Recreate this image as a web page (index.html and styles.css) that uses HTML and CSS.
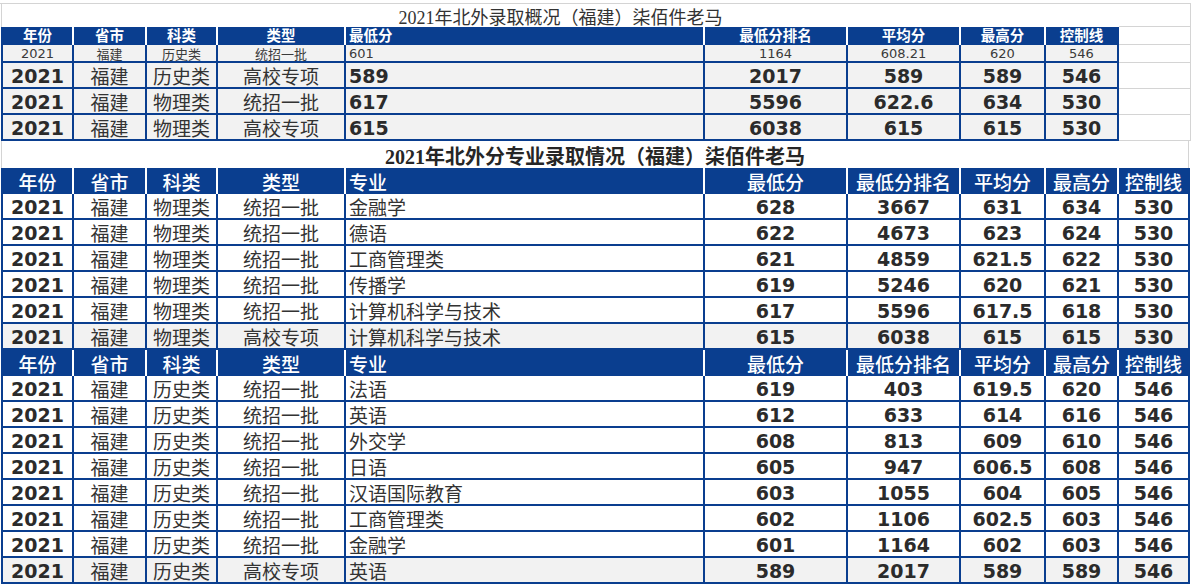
FILE: index.html
```html
<!DOCTYPE html>
<html lang="zh-CN">
<head>
<meta charset="utf-8">
<title>2021年北外录取概况（福建）</title>
<link rel="stylesheet" href="styles.css">
</head>
<body>
<div class="sheet">
  <div class="sheet-top"></div>
  <div class="sec1">
    <div class="t1">
      <div class="title1">2021年北外录取概况（福建）柒佰件老马</div>
      <div class="row r9 head head-s">
        <div class="cell">年份</div><div class="cell">省市</div><div class="cell">科类</div><div class="cell">类型</div><div class="cell l">最低分</div><div class="cell">最低分排名</div><div class="cell">平均分</div><div class="cell">最高分</div><div class="cell">控制线</div>
      </div>
      <div class="row r9 small gray">
        <div class="cell">2021</div><div class="cell zh">福建</div><div class="cell zh">历史类</div><div class="cell zh">统招一批</div><div class="cell l">601</div><div class="cell">1164</div><div class="cell">608.21</div><div class="cell">620</div><div class="cell">546</div>
      </div>
      <div class="row r9 big gray">
        <div class="cell num">2021</div><div class="cell zh">福建</div><div class="cell zh">历史类</div><div class="cell zh">高校专项</div><div class="cell num l">589</div><div class="cell num">2017</div><div class="cell num">589</div><div class="cell num">589</div><div class="cell num">546</div>
      </div>
      <div class="row r9 big gray">
        <div class="cell num">2021</div><div class="cell zh">福建</div><div class="cell zh">物理类</div><div class="cell zh">统招一批</div><div class="cell num l">617</div><div class="cell num">5596</div><div class="cell num">622.6</div><div class="cell num">634</div><div class="cell num">530</div>
      </div>
      <div class="row r9 big gray">
        <div class="cell num">2021</div><div class="cell zh">福建</div><div class="cell zh">物理类</div><div class="cell zh">高校专项</div><div class="cell num l">615</div><div class="cell num">6038</div><div class="cell num">615</div><div class="cell num">615</div><div class="cell num">530</div>
      </div>
    </div>
    <div class="filler">
      <div class="fc f-title"></div>
      <div class="fc f-s"></div>
      <div class="fc f-s"></div>
      <div class="fc f-b"></div>
      <div class="fc f-b"></div>
      <div class="fc f-b"></div>
    </div>
  </div>

  <div class="title2">2021年北外分专业录取情况（福建）柒佰件老马</div>

  <div class="t2">
    <div class="row r10 head head-b">
      <div class="cell">年份</div><div class="cell">省市</div><div class="cell">科类</div><div class="cell">类型</div><div class="cell l">专业</div><div class="cell">最低分</div><div class="cell">最低分排名</div><div class="cell">平均分</div><div class="cell">最高分</div><div class="cell">控制线</div>
    </div>
    <div class="row r10 big">
      <div class="cell num">2021</div><div class="cell zh">福建</div><div class="cell zh">物理类</div><div class="cell zh">统招一批</div><div class="cell zh l">金融学</div><div class="cell num">628</div><div class="cell num">3667</div><div class="cell num">631</div><div class="cell num">634</div><div class="cell num">530</div>
    </div>
    <div class="row r10 big">
      <div class="cell num">2021</div><div class="cell zh">福建</div><div class="cell zh">物理类</div><div class="cell zh">统招一批</div><div class="cell zh l">德语</div><div class="cell num">622</div><div class="cell num">4673</div><div class="cell num">623</div><div class="cell num">624</div><div class="cell num">530</div>
    </div>
    <div class="row r10 big">
      <div class="cell num">2021</div><div class="cell zh">福建</div><div class="cell zh">物理类</div><div class="cell zh">统招一批</div><div class="cell zh l">工商管理类</div><div class="cell num">621</div><div class="cell num">4859</div><div class="cell num">621.5</div><div class="cell num">622</div><div class="cell num">530</div>
    </div>
    <div class="row r10 big">
      <div class="cell num">2021</div><div class="cell zh">福建</div><div class="cell zh">物理类</div><div class="cell zh">统招一批</div><div class="cell zh l">传播学</div><div class="cell num">619</div><div class="cell num">5246</div><div class="cell num">620</div><div class="cell num">621</div><div class="cell num">530</div>
    </div>
    <div class="row r10 big">
      <div class="cell num">2021</div><div class="cell zh">福建</div><div class="cell zh">物理类</div><div class="cell zh">统招一批</div><div class="cell zh l">计算机科学与技术</div><div class="cell num">617</div><div class="cell num">5596</div><div class="cell num">617.5</div><div class="cell num">618</div><div class="cell num">530</div>
    </div>
    <div class="row r10 big gray">
      <div class="cell num">2021</div><div class="cell zh">福建</div><div class="cell zh">物理类</div><div class="cell zh">高校专项</div><div class="cell zh l">计算机科学与技术</div><div class="cell num">615</div><div class="cell num">6038</div><div class="cell num">615</div><div class="cell num">615</div><div class="cell num">530</div>
    </div>
    <div class="row r10 head head-b">
      <div class="cell">年份</div><div class="cell">省市</div><div class="cell">科类</div><div class="cell">类型</div><div class="cell l">专业</div><div class="cell">最低分</div><div class="cell">最低分排名</div><div class="cell">平均分</div><div class="cell">最高分</div><div class="cell">控制线</div>
    </div>
    <div class="row r10 big">
      <div class="cell num">2021</div><div class="cell zh">福建</div><div class="cell zh">历史类</div><div class="cell zh">统招一批</div><div class="cell zh l">法语</div><div class="cell num">619</div><div class="cell num">403</div><div class="cell num">619.5</div><div class="cell num">620</div><div class="cell num">546</div>
    </div>
    <div class="row r10 big">
      <div class="cell num">2021</div><div class="cell zh">福建</div><div class="cell zh">历史类</div><div class="cell zh">统招一批</div><div class="cell zh l">英语</div><div class="cell num">612</div><div class="cell num">633</div><div class="cell num">614</div><div class="cell num">616</div><div class="cell num">546</div>
    </div>
    <div class="row r10 big">
      <div class="cell num">2021</div><div class="cell zh">福建</div><div class="cell zh">历史类</div><div class="cell zh">统招一批</div><div class="cell zh l">外交学</div><div class="cell num">608</div><div class="cell num">813</div><div class="cell num">609</div><div class="cell num">610</div><div class="cell num">546</div>
    </div>
    <div class="row r10 big">
      <div class="cell num">2021</div><div class="cell zh">福建</div><div class="cell zh">历史类</div><div class="cell zh">统招一批</div><div class="cell zh l">日语</div><div class="cell num">605</div><div class="cell num">947</div><div class="cell num">606.5</div><div class="cell num">608</div><div class="cell num">546</div>
    </div>
    <div class="row r10 big">
      <div class="cell num">2021</div><div class="cell zh">福建</div><div class="cell zh">历史类</div><div class="cell zh">统招一批</div><div class="cell zh l">汉语国际教育</div><div class="cell num">603</div><div class="cell num">1055</div><div class="cell num">604</div><div class="cell num">605</div><div class="cell num">546</div>
    </div>
    <div class="row r10 big">
      <div class="cell num">2021</div><div class="cell zh">福建</div><div class="cell zh">历史类</div><div class="cell zh">统招一批</div><div class="cell zh l">工商管理类</div><div class="cell num">602</div><div class="cell num">1106</div><div class="cell num">602.5</div><div class="cell num">603</div><div class="cell num">546</div>
    </div>
    <div class="row r10 big">
      <div class="cell num">2021</div><div class="cell zh">福建</div><div class="cell zh">历史类</div><div class="cell zh">统招一批</div><div class="cell zh l">金融学</div><div class="cell num">601</div><div class="cell num">1164</div><div class="cell num">602</div><div class="cell num">603</div><div class="cell num">546</div>
    </div>
    <div class="row r10 big gray">
      <div class="cell num">2021</div><div class="cell zh">福建</div><div class="cell zh">历史类</div><div class="cell zh">高校专项</div><div class="cell zh l">英语</div><div class="cell num">589</div><div class="cell num">2017</div><div class="cell num">589</div><div class="cell num">589</div><div class="cell num">546</div>
    </div>
  </div>
</div>
</body>
</html>
```

FILE: styles.css
```css
* {
  box-sizing: border-box;
  margin: 0;
  padding: 0;
}

body {
  margin: 0;
  width: 1191px;
  height: 584px;
  overflow: hidden;
  background: #ffffff;
  font-family: "DejaVu Sans", "Noto Sans CJK SC", sans-serif;
  color: #2e2e2e;
}

.sheet {
  width: 1191px;
}

.sheet-top {
  height: 4px;
  border-bottom: 1px solid #d4d4d4;
}

.sec1 {
  display: flex;
}

.t1 {
  width: 1119px;
}

.title1 {
  height: 23px;
  margin-left: 1px;
  border-left: 1px solid #d4d4d4;
  display: flex;
  align-items: center;
  justify-content: center;
  font-family: "Liberation Serif", "Noto Sans CJK SC", serif;
  font-size: 18px;
  color: #333333;
}

.filler {
  flex: 1;
}

.fc {
  border-bottom: 1px solid #d4d4d4;
  border-right: 1px solid #d4d4d4;
}

.f-title { height: 23px; }
.f-s { height: 18px; }
.f-b { height: 26px; }

.title2 {
  height: 27px;
  margin-left: 1px;
  margin-right: 2px;
  border-left: 1px solid #d4d4d4;
  border-right: 1px solid #d4d4d4;
  display: flex;
  align-items: center;
  justify-content: center;
  padding-top: 2px;
  font-family: "Liberation Serif", "Noto Sans CJK SC", serif;
  font-size: 20px;
  font-weight: bold;
  color: #262626;
}

.row {
  display: grid;
  margin-left: 1px;
  border-left: 2px solid #0a3e8f;
}

.r9 {
  grid-template-columns: 71px 73px 71px 128px 359px 143px 113px 85px 73px;
}

.r10 {
  grid-template-columns: 71px 73px 71px 128px 359px 143px 113px 85px 73px 71px;
}

.cell {
  display: flex;
  align-items: center;
  justify-content: center;
  white-space: nowrap;
  border-right: 2px solid #0a3e8f;
  border-bottom: 2px solid #0a3e8f;
}

.cell.l {
  justify-content: flex-start;
  padding-left: 3px;
}

.gray .cell {
  background: #f2f2f2;
}

.head .cell {
  background: #0a3e8f;
  color: #ffffff;
  border-right-color: #ffffff;
  border-bottom: none;
  font-family: "Noto Sans CJK SC", sans-serif;
}

.head .cell:last-child {
  border-right-color: #0a3e8f;
}

.head-s {
  height: 18px;
}

.head-s .cell {
  font-size: 14.5px;
  font-weight: bold;
  line-height: 16px;
  padding-bottom: 2px;
}

.head-b {
  height: 26px;
}

.head-b .cell {
  font-size: 19px;
  font-weight: 500;
  line-height: 24px;
  padding-top: 1px;
}

.small {
  height: 18px;
}

.small .cell {
  font-size: 13px;
  line-height: 14px;
  padding-top: 2px;
  color: #3a3a3a;
}

.small .cell.zh {
  font-family: "Noto Sans CJK SC", sans-serif;
  font-size: 13px;
}

.big {
  height: 26px;
}

.big .cell {
  line-height: 22px;
  padding-top: 2px;
}

.big .num {
  font-family: "DejaVu Sans", sans-serif;
  font-size: 19px;
  font-weight: bold;
  color: #2b2b2b;
}

.big .zh {
  font-family: "Noto Sans CJK SC", sans-serif;
  font-size: 19px;
  font-weight: 400;
  color: #333333;
}
```
